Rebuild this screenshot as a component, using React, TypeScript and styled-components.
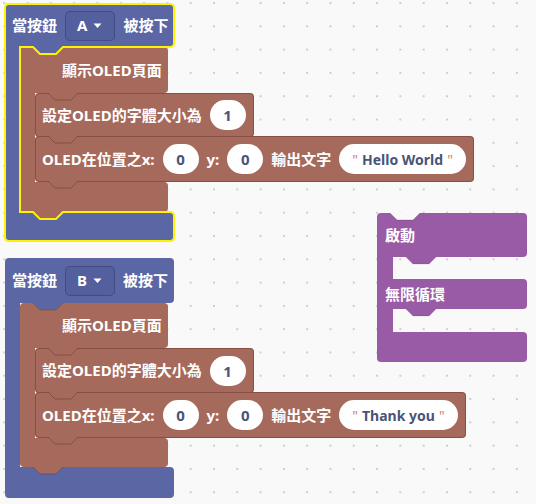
import React from "react";
import styled, { createGlobalStyle } from "styled-components";

const BLUE = "#5b67a5";
const BROWN = "#a56a5b";
const PURPLE = "#995ba5";
const EDGE = "rgba(70, 25, 15, 0.32)";
const BG = "#f9f9f9";
const FONT = `"Noto Sans", "Noto Sans CJK TC", sans-serif`;

const Global = createGlobalStyle`
  html, body { margin: 0; padding: 0; background: ${BG}; }
  body { font-family: ${FONT}; }
`;

const Canvas = styled.div`
  position: relative;
  width: 536px;
  height: 504px;
  overflow: hidden;
  background-color: ${BG};
  background-image: radial-gradient(circle at center, #cdcdcd 0.9px, transparent 1.4px);
  background-size: 23.3px 23.3px;
  background-position: -7.35px -8.65px;
`;

const Stack = styled.div<{ $x: number; $y: number }>`
  position: absolute;
  left: ${(p) => p.$x}px;
  top: ${(p) => p.$y}px;
  display: flex;
  flex-direction: column;
  align-items: flex-start;
`;

const CBlock = styled.div`
  position: relative;
  display: flex;
  flex-direction: column;
  align-items: flex-start;
`;

const Header = styled.div<{ $color: string; $w: number; $h: number; $pl?: number }>`
  position: relative;
  box-sizing: border-box;
  width: ${(p) => p.$w}px;
  height: ${(p) => p.$h}px;
  background: ${(p) => p.$color};
  border-radius: 4px 4px 4px 0;
  display: flex;
  align-items: center;
  gap: 8px;
  padding: 0 6px 0 ${(p) => p.$pl ?? 7}px;
`;

const MidRow = styled(Header)`
  border-radius: 0 4px 4px 0;
`;

const Body = styled.div`
  display: flex;
  align-items: stretch;
`;

const Arm = styled.div<{ $color: string; $w: number }>`
  width: ${(p) => p.$w}px;
  background: ${(p) => p.$color};
  flex: none;
`;

const Slot = styled.div<{ $h?: number }>`
  display: flex;
  flex-direction: column;
  align-items: flex-start;
  min-height: ${(p) => p.$h ?? 0}px;
`;

const Footer = styled.div<{ $color: string; $w: number; $h: number }>`
  position: relative;
  width: ${(p) => p.$w}px;
  height: ${(p) => p.$h}px;
  background: ${(p) => p.$color};
  border-radius: 0 4px 4px 4px;
`;

const Row = styled.div<{ $h: number }>`
  position: relative;
  box-sizing: border-box;
  height: ${(p) => p.$h}px;
  display: flex;
  align-items: center;
  gap: 8px;
  padding: 0 7px 0 6px;
  background: ${BROWN};
  border: 1px solid ${EDGE};
  border-radius: 4px;
  & + & {
    margin-top: -1px;
  }
`;

const Label = styled.span`
  color: #fff;
  font-family: ${FONT};
  font-weight: 700;
  font-size: 15px;
  white-space: nowrap;
  line-height: 1;
`;

const Pill = styled.div<{ $text?: boolean }>`
  box-sizing: border-box;
  height: 30px;
  min-width: 36px;
  padding: 0 ${(p) => (p.$text ? 9 : 12)}px;
  border-radius: 15px;
  background: #fff;
  display: flex;
  align-items: center;
  justify-content: center;
  color: #4a5479;
  font-family: ${FONT};
  font-weight: 700;
  font-size: ${(p) => (p.$text ? 14 : 15)}px;
  white-space: nowrap;
`;

const Quote = styled.span`
  color: #c9857a;
  font-weight: 400;
  margin: 0 4px;
`;

const Dropdown = styled.div`
  box-sizing: border-box;
  height: 30px;
  display: flex;
  align-items: center;
  gap: 6px;
  padding: 0 12px 0 11px;
  border-radius: 5px;
  border: 1px solid rgba(30, 40, 90, 0.35);
  background: rgba(40, 50, 110, 0.12);
`;

const TabSvg = styled.svg<{ $left: number }>`
  position: absolute;
  left: ${(p) => p.$left}px;
  top: 100%;
  z-index: 2;
  display: block;
  overflow: visible;
`;

const CutSvg = styled.svg`
  position: absolute;
  left: 13px;
  top: 0;
  z-index: 3;
  display: block;
  overflow: visible;
`;

const SelectSvg = styled.svg`
  position: absolute;
  left: 0;
  top: 0;
  z-index: 10;
  overflow: visible;
  pointer-events: none;
`;

const Tab = ({ color, left, edge = EDGE }: { color: string; left: number; edge?: string }) => (
  <TabSvg $left={left} width="30" height="8" viewBox="0 0 30 8">
    <path d="M0,-1 L0,0 L7,7 H23 L30,0 L30,-1 Z" fill={color} />
    <path d="M0,0 L7,7 H23 L30,0" fill="none" stroke={edge} strokeWidth="1" />
  </TabSvg>
);

const NotchCut = () => (
  <CutSvg width="30" height="8" viewBox="0 0 30 8">
    <path d="M0,-1 L0,0 L7,7 H23 L30,0 L30,-1 Z" fill={BG} />
    <path d="M0,0 L7,7 H23 L30,0" fill="none" stroke="rgba(0,0,0,0.18)" strokeWidth="1" />
  </CutSvg>
);

const Caret = () => (
  <svg width="9" height="6" viewBox="0 0 9 6">
    <path d="M0.5,0.5 H8.5 L4.5,5 Z" fill="#fff" />
  </svg>
);

type HatProps = {
  x: number;
  y: number;
  button: string;
  text: string;
  h: number[];
  selected?: boolean;
};

const HatStack = ({ x, y, button, text, h, selected }: HatProps) => {
  const [hh, bh, r1, r2, bf, hf] = h;
  const footTop = hh + bh + r1 + r2 - 1 + bf;
  const bottom = footTop + hf;
  return (
    <Stack $x={x} $y={y}>
      <CBlock>
        <Header $color={BLUE} $w={169} $h={hh}>
          <Label>當按鈕</Label>
          <Dropdown>
            <Label>{button}</Label>
            <Caret />
          </Dropdown>
          <Label>被按下</Label>
          <Tab color={BLUE} left={28} edge="rgba(0,0,0,0.15)" />
        </Header>
        <Body>
          <Arm $color={BLUE} $w={15} />
          <Slot>
            <CBlock>
              <Header $color={BROWN} $w={148} $h={bh} $pl={42}>
                <Label>顯示OLED頁面</Label>
                <Tab color={BROWN} left={28} />
              </Header>
              <Body>
                <Arm $color={BROWN} $w={15} />
                <Slot>
                  <Row $h={r1}>
                    <Label>設定OLED的字體大小為</Label>
                    <Pill>1</Pill>
                    <Tab color={BROWN} left={12} />
                  </Row>
                  <Row $h={r2}>
                    <Label>OLED在位置之x:</Label>
                    <Pill>0</Pill>
                    <Label>y:</Label>
                    <Pill>0</Pill>
                    <Label>輸出文字</Label>
                    <Pill $text>
                      <Quote>"</Quote>
                      {text}
                      <Quote>"</Quote>
                    </Pill>
                    <Tab color={BROWN} left={12} />
                  </Row>
                </Slot>
              </Body>
              <Footer $color={BROWN} $w={148} $h={bf}>
                <Tab color={BROWN} left={13} />
              </Footer>
            </CBlock>
          </Slot>
        </Body>
        <Footer $color={BLUE} $w={169} $h={hf} />
      </CBlock>
      {selected && (
        <SelectSvg width="170" height={bottom + 1} viewBox={`0 0 170 ${bottom + 1}`}>
          <path
            d={`M0,4 Q0,0 4,0 H165 Q169,0 169,4 V${hh - 4} Q169,${hh} 165,${hh} H58 L51,${hh + 7} H35 L28,${hh} H15 V${footTop} H28 L35,${footTop + 7} H51 L58,${footTop} H165 Q169,${footTop} 169,${footTop + 4} V${bottom - 4} Q169,${bottom} 165,${bottom} H4 Q0,${bottom} 0,${bottom - 4} Z`}
            fill="none"
            stroke="#fff200"
            strokeWidth="2"
          />
        </SelectSvg>
      )}
    </Stack>
  );
};

const LoopStack = () => (
  <Stack $x={377} $y={213}>
    <CBlock>
      <Header $color={PURPLE} $w={150} $h={44} $pl={8}>
        <NotchCut />
        <Label>啟動</Label>
        <Tab color={PURPLE} left={29} edge="rgba(0,0,0,0.12)" />
      </Header>
      <Body>
        <Arm $color={PURPLE} $w={16} />
        <Slot $h={22} />
      </Body>
      <MidRow $color={PURPLE} $w={150} $h={30} $pl={8}>
        <Label>無限循環</Label>
        <Tab color={PURPLE} left={29} edge="rgba(0,0,0,0.12)" />
      </MidRow>
      <Body>
        <Arm $color={PURPLE} $w={16} />
        <Slot $h={23} />
      </Body>
      <Footer $color={PURPLE} $w={150} $h={30} />
    </CBlock>
  </Stack>
);

export default function App() {
  return (
    <>
      <Global />
      <Canvas>
        <HatStack x={5} y={4} button="A" text="Hello World" h={[43, 46, 44, 46, 30, 29]} selected />
        <HatStack x={5} y={258} button="B" text="Thank you" h={[45, 45, 45, 46, 29, 31]} />
        <LoopStack />
      </Canvas>
    </>
  );
}
